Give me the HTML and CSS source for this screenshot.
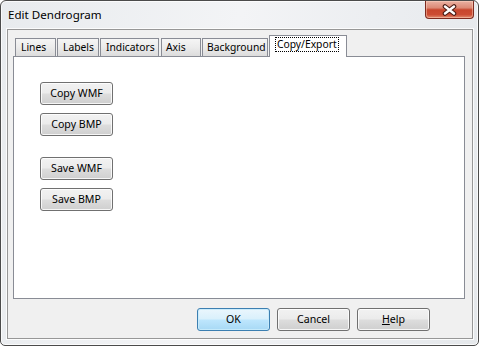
FILE: index.html
```html
<!DOCTYPE html>
<html>
<head>
<meta charset="utf-8">
<link rel="stylesheet" href="styles.css">
</head>
<body>
<div class="window">
  <div class="titlebar">
    <span class="title">Edit Dendrogram</span>
    <div class="close">
      <svg width="15" height="12" viewBox="0 0 15 12">
        <path d="M3 2.5 L12 9.5 M12 2.5 L3 9.5" stroke="#4a1c14" stroke-width="4.6" stroke-linecap="round" fill="none"/>
        <path d="M3 2.5 L12 9.5 M12 2.5 L3 9.5" stroke="#ffffff" stroke-width="2.4" stroke-linecap="round" fill="none"/>
      </svg>
    </div>
  </div>
  <div class="client">
    <div class="tabs">
      <div class="tab t-lines">Lines</div>
      <div class="tab t-labels">Labels</div>
      <div class="tab t-ind">Indicators</div>
      <div class="tab t-axis">Axis</div>
      <div class="tab t-bg">Background</div>
      <div class="tab sel t-copy"><span class="focus">Copy/Export</span></div>
    </div>
    <div class="panel">
      <div class="btncol">
        <button class="btn">Copy WMF</button>
        <button class="btn">Copy BMP</button>
        <button class="btn spaced">Save WMF</button>
        <button class="btn">Save BMP</button>
      </div>
    </div>
    <div class="actions">
      <button class="btn default">OK</button>
      <button class="btn">Cancel</button>
      <button class="btn"><u>H</u>elp</button>
    </div>
  </div>
</div>
</body>
</html>
```
FILE: styles.css
```css
html, body {
  margin: 0;
  padding: 0;
  background: #ffffff;
}
body {
  width: 479px;
  height: 346px;
  overflow: hidden;
  font-family: "Noto Sans", "DejaVu Sans", sans-serif;
}
.window {
  width: 479px;
  height: 346px;
  box-sizing: border-box;
  border: 1px solid #4b4b4b;
  border-radius: 6px 6px 5px 5px;
  background: linear-gradient(100deg, #e8ebee 0%, #f3f4f6 45%, #eceef1 70%, #e5e8eb 100%);
  box-shadow: inset 0 0 0 1px rgba(255,255,255,0.75);
  display: flex;
  flex-direction: column;
  overflow: hidden;
}
.titlebar {
  height: 28px;
  flex: none;
  display: flex;
  justify-content: space-between;
  align-items: flex-start;
  padding-left: 7px;
}
.title {
  font-size: 11.6px;
  line-height: 27px;
  color: #000;
}
.close {
  width: 49px;
  height: 18px;
  box-sizing: border-box;
  margin-right: 4px;
  border: 1px solid #7e2a1f;
  border-top: none;
  border-radius: 0 0 4px 4px;
  background: linear-gradient(#eab1a2 0%, #dc8a76 40%, #c8462d 52%, #cc4c33 80%, #e28c70 100%);
  box-shadow: inset 0 0 0 1px rgba(255,220,200,0.45);
  display: flex;
  align-items: center;
  justify-content: center;
}
.client {
  height: 310px;
  box-sizing: border-box;
  margin: 0 5px 0 6px;
  border: 1px solid #979797;
  box-shadow: 0 0 0 1px rgba(255,255,255,0.8);
  background: #f0f0f0;
  padding: 5px 0 0 5px;
  display: flex;
  flex-direction: column;
}
.tabs {
  height: 21px;
  display: flex;
  align-items: flex-end;
  gap: 1px;
  padding-left: 2px;
  position: relative;
  z-index: 1;
}
.tab {
  height: 18px;
  box-sizing: border-box;
  border: 1px solid #898c95;
  border-bottom: none;
  background: linear-gradient(#f5f5f5 0%, #ebebeb 50%, #dcdcdc 100%);
  font-size: 10.3px;
  line-height: 17px;
  padding-left: 5px;
  text-align: left;
  white-space: nowrap;
  overflow: hidden;
  color: #000;
}
.t-lines { width: 41px; }
.t-labels { width: 42px; }
.t-ind { width: 59px; margin-right: 1px; }
.t-axis { width: 40px; padding-left: 4px; }
.t-bg { width: 66px; padding-left: 4px; }
.tab.sel {
  width: 78px;
  height: 22px;
  margin-bottom: -1px;
  background: #ffffff;
  display: flex;
  justify-content: flex-start;
  padding: 1px 0 0 5px;
}
.focus {
  display: block;
  height: 15px;
  box-sizing: border-box;
  border: 1px dotted #000;
  padding: 0 1px;
  line-height: 13px;
}
.panel {
  width: 452px;
  height: 243px;
  box-sizing: border-box;
  border: 1px solid #898c95;
  background: #ffffff;
  padding: 25px 0 0 26px;
}
.btncol {
  display: flex;
  flex-direction: column;
  align-items: flex-start;
  gap: 8px;
}
.btncol .spaced {
  margin-top: 13px;
}
.btn {
  width: 73px;
  height: 23px;
  box-sizing: border-box;
  border: 1px solid #707070;
  border-radius: 3px;
  background: linear-gradient(#f2f2f2 0%, #ebebeb 48%, #dddddd 52%, #cfcfcf 100%);
  box-shadow: inset 0 0 0 1px rgba(255,255,255,0.8);
  font-family: "Noto Sans", "DejaVu Sans", sans-serif;
  font-size: 10.6px;
  line-height: 19px;
  color: #000;
  padding: 0;
  margin: 0;
  text-align: center;
}
.btn.default {
  border-color: #3c7fb1;
  background: linear-gradient(#eaf6fd 0%, #d9f0fc 48%, #bee6fd 52%, #a7d9f5 100%);
  box-shadow: inset 0 0 0 1px rgba(200,235,252,0.9);
}
.actions {
  display: flex;
  justify-content: flex-end;
  gap: 7px;
  margin-top: 9px;
  padding-right: 42px;
}
.actions u {
  text-decoration: underline;
}
```
